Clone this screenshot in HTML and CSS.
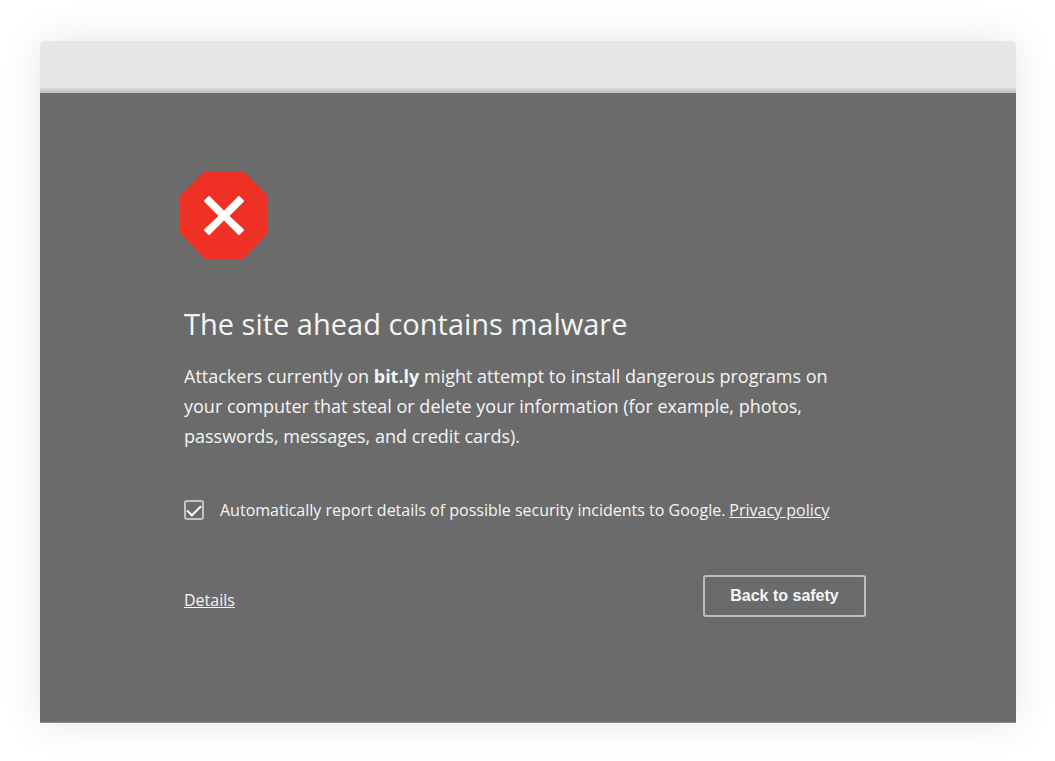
FILE: index.html
```html
<!DOCTYPE html>
<html lang="en">
<head>
    <meta charset="UTF-8">
    <meta name="viewport" content="width=device-width, initial-scale=1.0">
    <title>Security error</title>
    <link rel="stylesheet" href="styles.css">
</head>
<body>
    <div class="window">
        <div class="title-bar"></div>
        <main class="warning">
            <svg class="icon" viewBox="0 0 88 88" aria-hidden="true">
                <path fill="#ee3124" d="M25 0h38l25 25v37L63 88H25L0 62V25z"/>
                <path fill="#fff" stroke="#fff" stroke-width="2" stroke-linejoin="round" d="M29 26l15 15 15-15 4 4-15 15 15 14-4 4-15-15-15 15-4-4 15-14-15-15z"/>
            </svg>
            <h1>The site ahead contains malware</h1>
            <p>Attackers currently on <strong>bit.ly</strong> might attempt to install dangerous programs on your computer that steal or delete your information (for example, photos, passwords, messages, and credit cards).</p>
            <div class="report">
                <input type="checkbox" id="report-check" checked>
                <label for="report-check">Automatically report details of possible security incidents to Google.</label>
                <a href="#">Privacy policy</a>
            </div>
            <div class="actions">
                <a href="#">Details</a>
                <button type="button" class="safety-btn">Back to safety</button>
            </div>
        </main>
    </div>
</body>
</html>
```
FILE: styles.css
```css
* {
    box-sizing: border-box;
}
body {
    font-family: "Open Sans", "Noto Sans", sans-serif;
    margin: 0;
    padding: 41px 39px 38px 40px;
    background-color: #fff;
    color: #f5f5f5;
    min-height: 100vh;
    display: flex;
}
.window {
    flex: 1;
    display: flex;
    flex-direction: column;
    border-radius: 5px 5px 0 0;
    overflow: hidden;
    box-shadow: 0 0 40px rgba(0, 0, 0, 0.1);
}
.title-bar {
    height: 52px;
    background: linear-gradient(to top, #bdbdbd, #d2d2d2 4px, #e6e6e6 5px);
}
.warning {
    flex: 1;
    background-color: #6b6b6b;
    border-bottom: 1px solid #8c8a8c;
    padding: 78px 150px 40px 144px;
}
.icon {
    display: block;
    width: 88px;
    height: 88px;
    margin-left: -4px;
    fill: none;
}
h1 {
    font-size: 29px;
    font-weight: 400;
    line-height: 40px;
    margin: 45px 0 17px;
}
p {
    font-size: 18px;
    line-height: 30px;
    margin: 0;
    max-width: 660px;
}
a {
    color: inherit;
}
.report {
    display: flex;
    align-items: center;
    margin-top: 48px;
    font-size: 16px;
    line-height: 22px;
    white-space: nowrap;
}
.report input {
    appearance: none;
    width: 20px;
    height: 20px;
    margin: 0 16px 0 0;
    border: 2px solid #c4c4c4;
    border-radius: 3px;
    display: grid;
    justify-content: center;
    padding-top: 3px;
}
.report input:checked::before {
    content: "";
    width: 12px;
    height: 6px;
    border-left: 2px solid #fff;
    border-bottom: 2px solid #fff;
    transform: rotate(-45deg);
}
.report a {
    margin-left: 4px;
}
.actions {
    display: flex;
    justify-content: space-between;
    align-items: flex-end;
    margin-top: 54px;
    font-size: 16px;
    line-height: 34px;
}
.safety-btn {
    width: 163px;
    height: 42px;
    border: 2px solid #bdbdbd;
    border-radius: 3px;
    background: none;
    color: #f5f5f5;
    font-family: "Liberation Sans", Arial, sans-serif;
    font-size: 16px;
    font-weight: 700;
}
```
